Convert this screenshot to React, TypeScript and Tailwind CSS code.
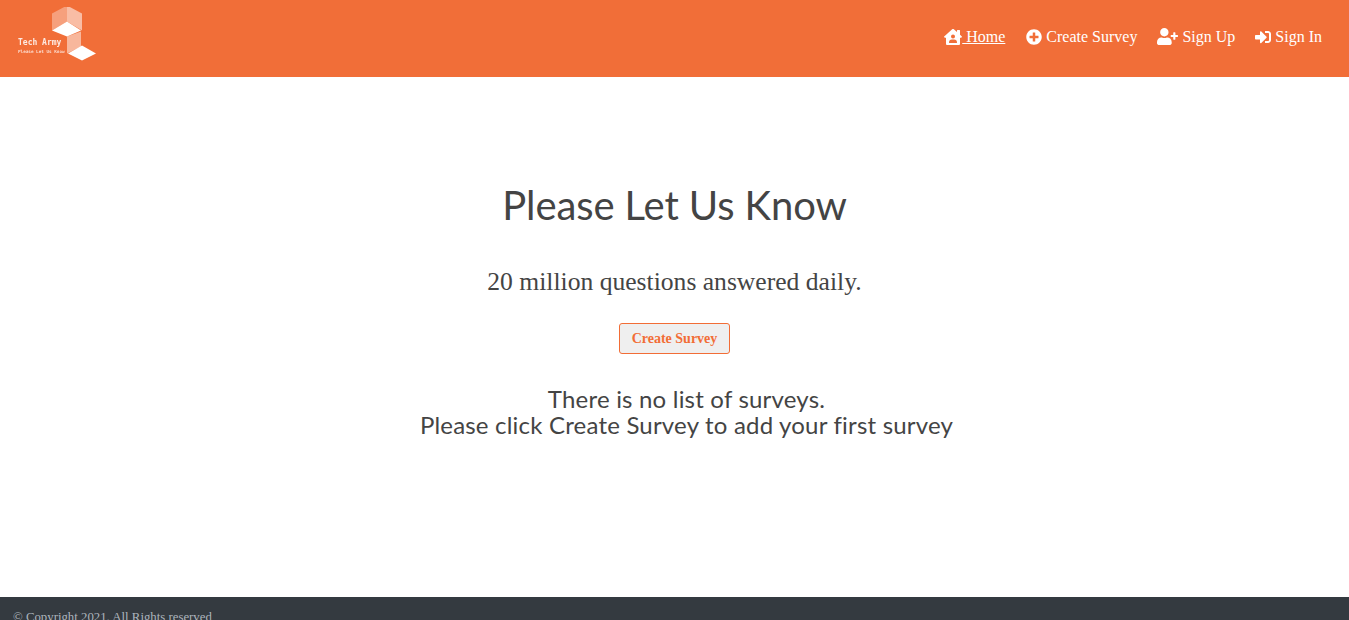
import React from "react";
import { FaHouseUser, FaPlusCircle, FaUserPlus, FaSignInAlt } from "react-icons/fa";

function Logo() {
  return (
    <svg width="84" height="60" viewBox="14 8.5 84 60" className="block blur-[0.4px]">
      <path d="M52 15 L67 7 L67 23 L52 32 Z" fill="#fff" fillOpacity="0.35" />
      <path d="M67 7 L82 15 L82 32 L67 23 Z" fill="#fff" fillOpacity="0.55" />
      <path d="M52 32 L67 23 L81 32 L67 38 Z" fill="#fff" />
      <path d="M67 38 L81 33 L81 48 L67 55 Z" fill="#fff" fillOpacity="0.5" />
      <path d="M68 55 L82 47 L96 55 L82 62 Z" fill="#fff" />
      <text x="18" y="46" fontSize="8" fontWeight="700" fontFamily="'DejaVu Sans Mono', monospace" fill="#fff" fillOpacity="0.85">Tech Army</text>
      <text x="18" y="54" fontSize="4.3" fontWeight="700" fontFamily="'DejaVu Sans Mono', monospace" fill="#fff" fillOpacity="0.75">Please Let Us Know</text>
    </svg>
  );
}

export default function App() {
  return (
    <div className="flex h-screen flex-col overflow-hidden bg-white font-['Liberation_Serif',serif] text-[#444]">
      {/* header */}
      <header className="flex h-[77px] shrink-0 items-center justify-between bg-[#f16e38] pb-[4px] pl-[14px] pr-[27px]">
        <Logo />
        <nav className="flex items-center gap-5 text-[16px] text-white">
          <a className="mr-[1px] flex items-center whitespace-pre underline">
            <FaHouseUser className="text-[18px]" /> Home
          </a>
          <a className="flex items-center whitespace-pre">
            <FaPlusCircle className="text-[16px]" /> Create Survey
          </a>
          <a className="flex items-center whitespace-pre">
            <FaUserPlus className="text-[21px]" /> Sign Up
          </a>
          <a className="flex items-center whitespace-pre">
            <FaSignInAlt className="text-[16px]" /> Sign In
          </a>
        </nav>
      </header>

      <main className="flex flex-1 flex-col items-center pt-[101px] text-center">
        <h1 className="font-['Lato',sans-serif] text-[40px] leading-[54px] tracking-[-0.1px]">Please Let Us Know</h1>
        <p className="mt-[35px] text-[25.6px] leading-[30px]">20 million questions answered daily.</p>
        <button className="mt-[26px] h-[31px] w-[111px] rounded-[3px] border border-[#f26d36] bg-[#efefef] text-[14px] font-bold text-[#f26d36]">
          Create Survey
        </button>
        {/* this block sits a bit right of the page centre */}
        <div className="mt-[32px] pl-[24px] font-['Lato',sans-serif] text-[24px] leading-[26px] tracking-[0.2px]">
          <p>There is no list of surveys.</p>
          <p>Please click Create Survey to add your first survey</p>
        </div>
      </main>

      <footer className="h-[23px] shrink-0 overflow-hidden bg-[#343a40] pl-[13px] pt-[12px] text-[12.8px] leading-[16px] text-[#adb5bd]">
        © Copyright 2021. All Rights reserved
      </footer>
    </div>
  );
}
